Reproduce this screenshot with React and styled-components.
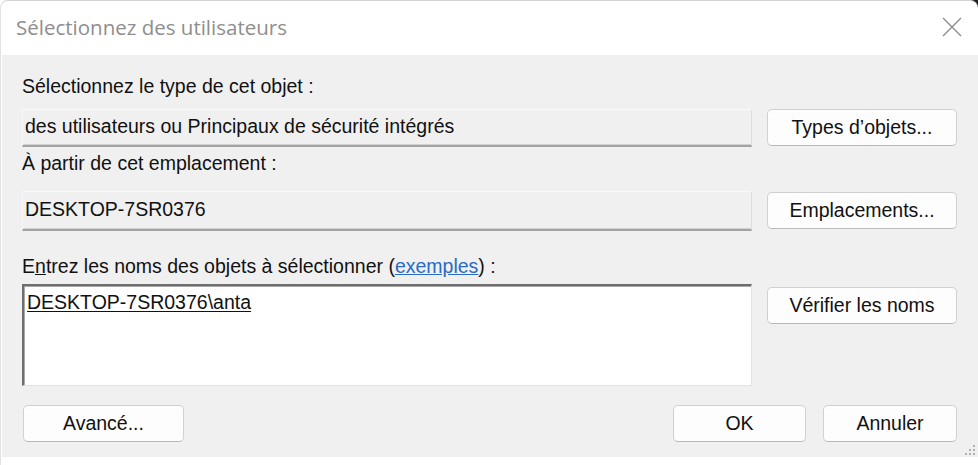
import React from "react"
import styled, { createGlobalStyle } from "styled-components"

const Global = createGlobalStyle`
  html, body {
    margin: 0;
    padding: 0;
  }
  body {
    width: 978px;
    height: 465px;
    overflow: hidden;
    background: radial-gradient(circle at 100% 0, #202020 0 7px, #ffffff 9px);
  }
`

const Window = styled.div`
  position: relative;
  width: 978px;
  height: 465px;
  box-sizing: border-box;
  background: #ffffff;
  border-top: 1px solid #d4d4d4;
  border-left: 1px solid #e2e2e2;
  border-top-left-radius: 8px;
  border-top-right-radius: 8px;
  display: flex;
  flex-direction: column;
  font-family: "Liberation Sans", Arial, sans-serif;
`

const TitleBar = styled.div`
  height: 54px;
  display: flex;
  align-items: center;
  justify-content: space-between;
  padding: 0 15px 0 15px;
  flex-shrink: 0;
`

const Title = styled.div`
  font-family: "Open Sans", "Noto Sans", sans-serif;
  font-size: 20.5px;
  color: #8e8e8e;
  margin-top: -3px;
`

const Close = styled.div`
  width: 22px;
  height: 22px;
  display: flex;
  align-items: center;
  justify-content: center;
  margin-top: -2px;
`

const Body = styled.div`
  background: #f0f0f0;
  height: 402px;
  box-sizing: border-box;
  padding: 21px 21px 14px 20px;
  display: flex;
  flex-direction: column;
  margin-left: 1px;
`

const Label = styled.div`
  height: 20px;
  line-height: 20px;
  font-size: 19.5px;
  color: #111111;
  margin-top: ${p => p.$top || 0}px;
  white-space: nowrap;
`

const Row = styled.div`
  display: grid;
  grid-template-columns: 1fr 190px;
  column-gap: 15px;
  height: ${p => p.$h}px;
  margin-top: ${p => p.$top}px;
`

const Field = styled.div`
  box-sizing: border-box;
  height: ${p => p.$h}px;
  background: #f0f0f0;
  border-top: 1px solid #f9f9f9;
  border-left: 1px solid #f6f6f6;
  border-right: 1px solid #dedede;
  border-bottom: 2px solid #a2a2a2;
  box-shadow: inset 0 -1px 0 #d2d2d2;
  display: flex;
  align-items: center;
  padding: 0 0 3px 2px;
  font-size: 19.5px;
  line-height: 20px;
  color: #111111;
  white-space: nowrap;
`

const TextBox = styled.div`
  box-sizing: border-box;
  height: 102px;
  background: #ffffff;
  border-top: 2px solid #6e6e6e;
  border-left: 2px solid #6e6e6e;
  border-right: 1px solid #e2e2e2;
  border-bottom: 1px solid #e2e2e2;
  box-shadow: inset 1px 1px 0 #a8a8a8;
  padding: 6px 0 0 3px;
  font-size: 19.5px;
  line-height: 20px;
  color: #111111;
`

const Resolved = styled.span`
  text-decoration: underline;
  text-underline-offset: 2px;
`

const Button = styled.button`
  box-sizing: border-box;
  width: ${p => p.$w ? `${p.$w}px` : "100%"};
  height: 37px;
  margin-top: ${p => p.$top || 0}px;
  background: #fdfdfd;
  border: 1px solid #d0d0d0;
  border-bottom-color: #b8b8b8;
  border-radius: 5px;
  font-family: "Liberation Sans", Arial, sans-serif;
  font-size: 19.5px;
  color: #111111;
  padding: 0;
  cursor: default;
`

const Footer = styled.div`
  display: flex;
  align-items: center;
  margin-top: 19px;
  margin-left: 1px;
`

const FooterRight = styled.div`
  margin-left: auto;
  display: flex;
  gap: 17px;
`

const Key = styled.span`
  text-decoration: underline;
`

const Link = styled.a`
  color: #2a6bc4;
  text-decoration: underline;
`

const Grip = styled.svg`
  position: absolute;
  right: 2px;
  bottom: 9px;
`

export default function App() {
  return (
    <>
      <Global />
      <Window>
        <TitleBar>
          <Title>Sélectionnez des utilisateurs</Title>
          <Close>
            <svg width="20" height="20" viewBox="0 0 20 20">
              <path d="M1 1 L19 19 M19 1 L1 19" stroke="#8a8a8a" strokeWidth="1.3" fill="none" />
            </svg>
          </Close>
        </TitleBar>
        <Body>
          <Label>Sélectionnez le type de cet objet :</Label>
          <Row $h={38} $top={13}>
            <Field $h={38}>des utilisateurs ou Principaux de sécurité intégrés</Field>
            <Button>Types d’objets...</Button>
          </Row>
          <Label $top={6}>À partir de cet emplacement :</Label>
          <Row $h={40} $top={18}>
            <Field $h={40}>DESKTOP-7SR0376</Field>
            <Button $top={1}>Emplacements...</Button>
          </Row>
          <Label $top={25}>
            E<Key>n</Key>trez les noms des objets à sélectionner (<Link>exemples</Link>) :
          </Label>
          <Row $h={102} $top={8}>
            <TextBox>
              <Resolved>DESKTOP-7SR0376\anta</Resolved>
            </TextBox>
            <Button $top={3}>Vérifier les noms</Button>
          </Row>
          <Footer>
            <Button $w={161}>Avancé...</Button>
            <FooterRight>
              <Button $w={133}>OK</Button>
              <Button $w={134}>Annuler</Button>
            </FooterRight>
          </Footer>
        </Body>
        <Grip width="12" height="12" viewBox="0 0 12 12">
          <rect x="9" y="1" width="2" height="2" fill="#b0b0b0" />
          <rect x="5" y="5" width="2" height="2" fill="#b0b0b0" />
          <rect x="9" y="5" width="2" height="2" fill="#b0b0b0" />
          <rect x="1" y="9" width="2" height="2" fill="#b0b0b0" />
          <rect x="5" y="9" width="2" height="2" fill="#b0b0b0" />
          <rect x="9" y="9" width="2" height="2" fill="#b0b0b0" />
        </Grip>
      </Window>
    </>
  )
}
